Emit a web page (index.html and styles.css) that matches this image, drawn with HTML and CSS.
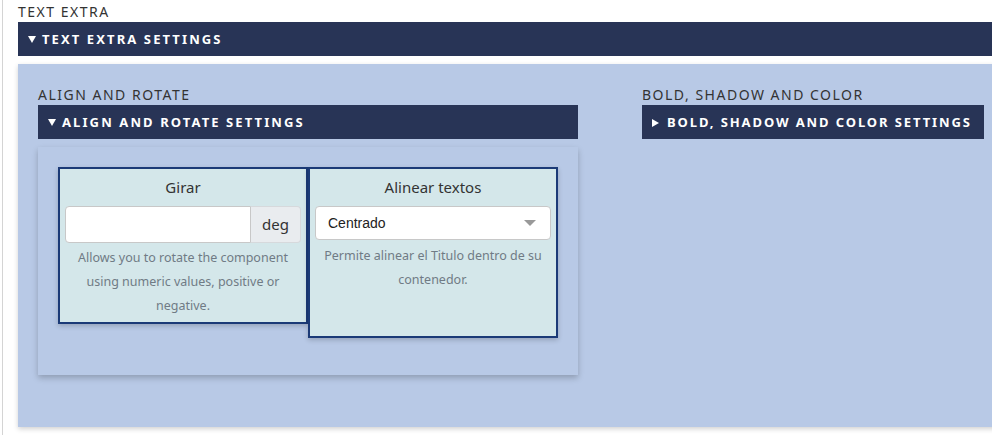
FILE: index.html
```html
<!DOCTYPE html>
<html lang="en">
<head>
    <meta charset="UTF-8">
    <meta name="viewport" content="width=device-width, initial-scale=1.0">
    <title>Text Extra</title>
    <link rel="stylesheet" href="styles.css">
</head>
<body>
    <div class="page">
        <div class="section-label">TEXT EXTRA</div>
        <div class="section-bar"><span class="caret caret-down"></span>TEXT EXTRA SETTINGS</div>

        <div class="outer-panel">
            <div class="column column-left">
                <div class="section-label">ALIGN AND ROTATE</div>
                <div class="section-bar"><span class="caret caret-down"></span>ALIGN AND ROTATE SETTINGS</div>

                <div class="inner-panel">
                    <div class="field-card">
                        <div class="field-title">Girar</div>
                        <div class="input-group">
                            <input type="text" class="field-input">
                            <span class="input-addon">deg</span>
                        </div>
                        <p class="field-help">Allows you to rotate the component using numeric values, positive or negative.</p>
                    </div>
                    <div class="field-card field-card-tall">
                        <div class="field-title">Alinear textos</div>
                        <div class="select-box">
                            <span>Centrado</span>
                            <span class="select-arrow"></span>
                        </div>
                        <p class="field-help">Permite alinear el Titulo dentro de su contenedor.</p>
                    </div>
                </div>
            </div>

            <div class="column column-right">
                <div class="section-label">BOLD, SHADOW AND COLOR</div>
                <div class="section-bar section-bar-fit"><span class="caret caret-right"></span>BOLD, SHADOW AND COLOR SETTINGS</div>
            </div>
        </div>
    </div>
</body>
</html>
```

FILE: styles.css
```css
body {
    margin: 0;
    padding-left: 2px;
    font-family: "Noto Sans", sans-serif;
    overflow: hidden;
}
.page {
    border-left: 1px solid #d4d4d4;
    padding: 3px 0 0 15px;
    height: 432px;
}
.section-label {
    font-size: 14px;
    letter-spacing: 1.5px;
    color: #333;
    line-height: 18px;
    margin-bottom: 1px;
}
.section-bar {
    background-color: #283456;
    color: #fff;
    font-weight: bold;
    font-size: 13px;
    letter-spacing: 2.1px;
    height: 34px;
    line-height: 35px;
    padding-left: 11px;
    white-space: nowrap;
}
.section-bar-fit {
    display: inline-block;
    padding-right: 12px;
    letter-spacing: 1.9px;
}
.caret {
    display: inline-block;
    width: 0;
    height: 0;
    vertical-align: 1px;
}
.caret-down {
    border-left: 4px solid transparent;
    border-right: 4px solid transparent;
    border-top: 7px solid #fff;
    margin-left: -1px;
    margin-right: 6px;
}
.caret-right {
    border-top: 4.5px solid transparent;
    border-bottom: 4.5px solid transparent;
    border-left: 7px solid #fff;
    margin-left: -1px;
    margin-right: 8px;
    vertical-align: 0;
}
.outer-panel {
    margin-top: 8px;
    background-color: #b8c9e6;
    box-shadow: 0 2px 5px rgba(0, 0, 0, 0.18);
    display: flex;
    gap: 64px;
    padding: 22px 0 52px 20px;
    margin-right: -40px;
}
.column-left {
    width: 540px;
    flex-shrink: 0;
}
.inner-panel {
    margin-top: 8px;
    background-color: #b8c9e6;
    box-shadow: 0 3px 6px rgba(0, 0, 0, 0.22);
    padding: 20px 20px 37px 20px;
    display: flex;
    align-items: flex-start;
}
.field-card {
    width: 250px;
    box-sizing: border-box;
    background-color: #d4e7ea;
    border: 2px solid #1b3a77;
    padding: 6px 5px 4px 5px;
    text-align: center;
    box-shadow: 0 2px 5px rgba(0, 0, 0, 0.2);
}
.field-card-tall {
    height: 171px;
}
.field-title {
    font-size: 15px;
    color: #333;
    line-height: 24px;
    margin-bottom: 7px;
}
.input-group {
    display: flex;
    height: 37px;
}
.field-input {
    flex: 1;
    min-width: 0;
    border: 1px solid #c8c8c8;
    border-radius: 4px 0 0 4px;
    background: #fff;
    margin: 0;
}
.input-addon {
    width: 50px;
    box-sizing: border-box;
    background-color: #e9ecef;
    border: 1px solid #d6d9dc;
    border-left: none;
    border-radius: 0 4px 4px 0;
    font-size: 15px;
    color: #333;
    line-height: 35px;
}
.select-box {
    height: 34px;
    box-sizing: border-box;
    background: #fff;
    border: 1px solid #c8c8c8;
    border-radius: 4px;
    display: flex;
    align-items: center;
    justify-content: space-between;
    padding: 0 14px 0 12px;
    font-family: "Liberation Sans", Arial, sans-serif;
    font-size: 14px;
    color: #222;
}
.select-arrow {
    width: 0;
    height: 0;
    border-left: 6px solid transparent;
    border-right: 6px solid transparent;
    border-top: 6px solid #999;
}
.field-help {
    margin: 3px 0 0 0;
    font-size: 12.5px;
    line-height: 24px;
    color: #707b85;
}
.field-card-tall .field-help {
    margin-top: 4px;
}
```
